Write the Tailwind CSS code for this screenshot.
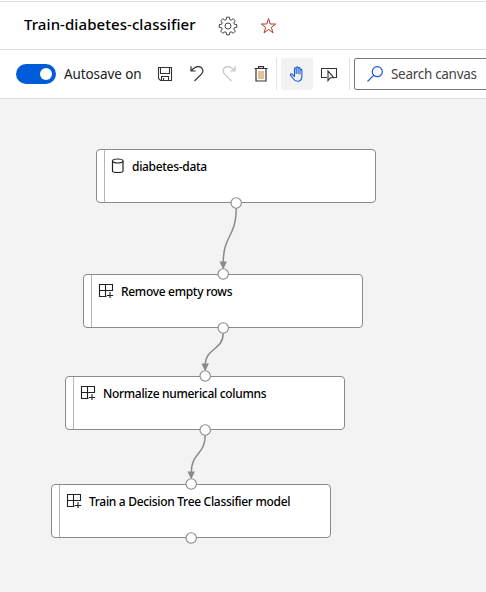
<!DOCTYPE html>
<html lang="en">
<head>
<meta charset="utf-8">
<title>Train-diabetes-classifier</title>
<script src="https://cdn.jsdelivr.net/npm/@tailwindcss/browser@4"></script>
</head>
<body class="w-[486px] h-[592px] overflow-hidden flex flex-col bg-white font-['Noto_Sans','Open_Sans',sans-serif] text-black">
<svg class="hidden">
  <symbol id="component" viewBox="0 0 16 16"><path d="M8.5 13.5H1.5V1.5H14.500V8M1.5 7.5H14.500M7.5 1.5V13.5M12 9V15M8.8 12.500H15.200" fill="none" stroke="#222" stroke-width="1.100"/></symbol>
</svg>

<header class="mt-px h-[49px] shrink-0 border-y border-[#dcdcdc] flex items-center pl-6">
  <h1 class="-mt-[3px] w-[172px] text-[15px] leading-5 font-medium whitespace-nowrap tracking-[0.07px]">Train-diabetes-classifier</h1>
  <svg class="ml-[22px] mt-px w-5 h-5" viewBox="0 0 20 20" fill="none" stroke="#444" stroke-width="1"><path d="M8.600 1.200h2.800l.4 2.500 1.300.5 2.100-1.500 2.100 2.100-1.500 2.100.5 1.300 2.500.4v2.800l-2.500.4-.5 1.300 1.500 2.100-2.100 2.100-2.100-1.500-1.300.5-.4 2.500H8.600l-.4-2.500-1.300-.5-2.100 1.500-2.100-2.100 1.500-2.100-.5-1.300-2.500-.4V8.600l2.500-.4.5-1.300-1.500-2.100 2.100-2.100 2.100 1.500 1.300-.5z"/><circle cx="10" cy="10" r="3"/></svg>
  <svg class="ml-[21px] w-[18px] h-[18px]" viewBox="0 0 18 18" fill="none" stroke="#b63b24" stroke-width="1"><path d="M9.500 1.600l1.700 5.400h5.500l-4.400 3.400 1.700 5.400L9.500 12.500 5 15.800l1.700-5.400L2.300 7h5.500z"/></svg>
</header>

<div class="h-[49px] shrink-0 border-b border-[#dcdcdc] flex items-center pl-4">
  <div class="shrink-0 w-10 h-5 rounded-full bg-[#015cda] flex items-center justify-end pr-1"><span class="w-3 h-3 rounded-full bg-white"></span></div>
  <span class="ml-2 w-[85px] shrink-0 text-[13.5px] leading-5 whitespace-nowrap tracking-[-0.1px] text-[#222]">Autosave on</span>
  <div class="shrink-0 w-8 flex justify-center"><svg class="w-4 h-4" viewBox="0 0 16 16" fill="none" stroke="#333" stroke-width="1.100"><path d="M1.500 1.500h13v13H3.500l-2-2zM3.500 1.500v6h9v-6M4.500 14.500v-4h7v4M6.500 12v2.500"/></svg></div>
  <div class="shrink-0 w-8 flex justify-center"><svg class="w-4 h-4" viewBox="0 0 16 16" fill="none" stroke="#333" stroke-width="1.200"><path d="M2 .3V5H6.700M2.200 4.800C4.500 2.100 7 .4 9.800 .6c3.900.3 5.300 4.700 2.800 7.300L5.500 15"/></svg></div>
  <div class="shrink-0 w-8 flex justify-center"><svg class="w-4 h-4" viewBox="0 0 16 16" fill="none" stroke="#c4c4c4" stroke-width="1.200"><path d="M14 .3V5H9.300M13.800 4.800C11.500 2.100 9 .4 6.200 .6 2.300 .9 .9 5.300 3.400 7.900l7.100 7.100"/></svg></div>
  <div class="shrink-0 w-[31px] flex justify-center"><svg class="w-4 h-4" viewBox="0 0 16 16" fill="none"><path d="M1.500 2.500h13M5.500 2.500V.7h5v1.800M3 2.500v12.500h10V2.500" stroke="#333" stroke-width="1.200"/><path d="M6 5v8M8 5v8M10 5v8" stroke="#c98224"/></svg></div>
  <i class="shrink-0 w-px h-8 bg-[#e3e3e3]"></i>
  <div class="shrink-0 ml-1 w-8 h-8 rounded-xs bg-[#f2f2f2] flex items-center justify-center"><svg class="w-4 h-4" viewBox="0 0 16 16" fill="none" stroke="#1d5bd6" stroke-width="1.100" stroke-linecap="round" stroke-linejoin="round"><path d="M5.500 8V2.700c0-1.200 1.700-1.200 1.700 0V7.500M7.200 2.500V1.700c0-1.300 1.900-1.300 1.900 0V7.500M9.100 2.500c0-1.200 1.900-1.200 1.900 0V8M11 4.300c0-1.200 1.900-1.200 1.900 0V10c0 3-1.500 5.300-4.200 5.300-2.200 0-3.500-1-4.600-2.800L1.500 9.200c-.6-1 .7-1.900 1.500-1.100l2.500 2.400V7"/></svg></div>
  <div class="shrink-0 w-8 flex justify-center"><svg class="w-[18px] h-4" viewBox="0 0 18 16" fill="none" stroke="#333" stroke-width="1.100"><path d="M7 11.500H1.500v-9h15v9h-2M8 5v9.500l2.300-2.700h3.500z"/></svg></div>
  <i class="shrink-0 ml-[4px] w-px h-8 bg-[#e3e3e3]"></i>
  <div class="ml-1 w-[150px] shrink-0 h-8 border border-[#767676] rounded-xs flex items-center pl-3">
    <svg class="shrink-0 w-4 h-4" viewBox="0 0 16 16" fill="none" stroke="#1d5bd6" stroke-width="1.200"><circle cx="10.300" cy="5.700" r="5"/><path d="M6.700 9.300L.5 15.500"/></svg>
    <span class="ml-2 text-[13.500px] leading-5 whitespace-nowrap tracking-[-0.3px] text-[#444]">Search canvas</span>
  </div>
</div>

<main class="relative flex-1 bg-[#f3f3f3] text-[12px] leading-4 font-medium whitespace-nowrap tracking-[-0.31px]">
  <section class="absolute left-[96px] top-[50px] w-[280px] h-[54px] bg-white border border-[#8a8a8a] rounded-[4px] flex">
    <i class="w-2 border-r border-[#b5b5b5]"></i>
    <svg class="ml-[5px] mt-[8px] w-4 h-4" viewBox="0 0 16 16" fill="none" stroke="#222" stroke-width="1.200"><path d="M2.500 3v10c0 2 10.500 2 10.500 0V3"/><ellipse cx="7.750" cy="3" rx="5.250" ry="2"/></svg>
    <span class="ml-[6px] mt-[9px]">diabetes-data</span>
  </section>
  <section class="absolute left-[83px] top-[175px] w-[280px] h-[54px] bg-white border border-[#8a8a8a] rounded-[4px] flex">
    <i class="w-2 border-r border-[#b5b5b5]"></i>
    <svg class="ml-[6px] mt-[8px] w-4 h-4"><use href="#component"/></svg>
    <span class="ml-[7px] mt-[9px]">Remove empty rows</span>
  </section>
  <section class="absolute left-[65px] top-[277px] w-[280px] h-[54px] bg-white border border-[#8a8a8a] rounded-[4px] flex">
    <i class="w-2 border-r border-[#b5b5b5]"></i>
    <svg class="ml-[6px] mt-[8px] w-4 h-4"><use href="#component"/></svg>
    <span class="ml-[7px] mt-[9px]">Normalize numerical columns</span>
  </section>
  <section class="absolute left-[51px] top-[385px] w-[280px] h-[54px] bg-white border border-[#8a8a8a] rounded-[4px] flex">
    <i class="w-2 border-r border-[#b5b5b5]"></i>
    <svg class="ml-[6px] mt-[8px] w-4 h-4"><use href="#component"/></svg>
    <span class="ml-[7px] mt-[9px]">Train a Decision Tree Classifier model</span>
  </section>

  <svg class="absolute left-0 top-0 w-[486px] h-[493px]" viewBox="0 99 486 493">
    <g fill="none" stroke="#8a8a8a" stroke-width="1.500">
      <path d="M236.200 208C236.200 238 223.200 234 223.200 264"/>
      <path d="M223.200 333C223.200 351 205.200 347 205.200 366"/>
      <path d="M205.200 435C205.200 456 191.200 451 191.200 474"/>
    </g>
    <path fill="#8a8a8a" d="M219.500 261.500h7.400l-3.700 8zM201.500 363.500h7.400l-3.700 8zM187.500 471.500h7.400l-3.700 8z"/>
    <g fill="#fff" stroke="#8a8a8a" stroke-width="1.100">
      <circle cx="236.200" cy="203" r="5.200"/><circle cx="223.200" cy="274" r="5.200"/><circle cx="223.200" cy="328" r="5.200"/><circle cx="205.200" cy="376" r="5.200"/><circle cx="205.200" cy="430" r="5.200"/><circle cx="191.200" cy="484" r="5.200"/><circle cx="191.200" cy="538" r="5.200"/>
    </g>
  </svg>
</main>
</body>
</html>
